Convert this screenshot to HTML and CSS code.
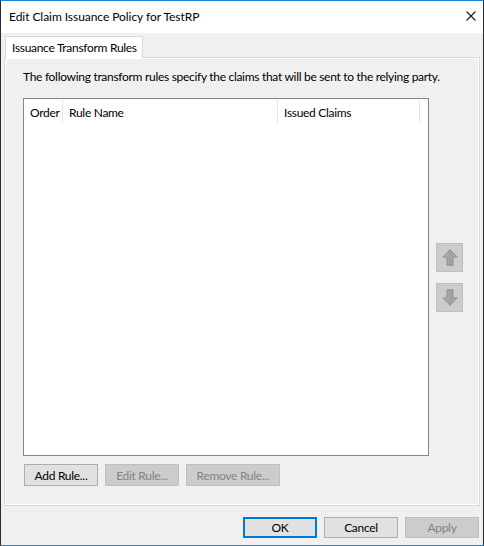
FILE: index.html
```html
<!DOCTYPE html>
<html>
<head>
<meta charset="utf-8">
<link rel="stylesheet" href="styles.css">
</head>
<body>
<div class="window">
  <div class="titlebar">
    <span class="title">Edit Claim Issuance Policy for TestRP</span>
    <svg class="close" width="10" height="10" viewBox="0 0 10 10"><path d="M0.5 0.5 L9.5 9.5 M9.5 0.5 L0.5 9.5" stroke="#1a1a1a" stroke-width="1.1" fill="none"/></svg>
  </div>
  <div class="tabs">
    <div class="tab">Issuance Transform Rules</div>
  </div>
  <div class="tabpage">
    <div class="panel">
      <p class="desc">The following transform rules specify the claims that will be sent to the relying party.</p>
      <div class="listrow">
        <div class="list">
          <div class="header">
            <div class="col col-order">Order</div>
            <div class="col col-name">Rule Name</div>
            <div class="col col-claims">Issued Claims</div>
          </div>
        </div>
        <div class="side">
          <div class="sidebtn">
            <svg width="16" height="17" viewBox="0 0 16 17"><defs><linearGradient id="ga" x1="0" x2="1" y1="0" y2="0"><stop offset="0" stop-color="#b8b8b8"/><stop offset="0.5" stop-color="#a0a0a0"/><stop offset="1" stop-color="#acacac"/></linearGradient></defs><path d="M8 0.8 L15.2 8 L11 8 L11 16.2 L5 16.2 L5 8 L0.8 8 Z" fill="url(#ga)" stroke="#8e8e8e" stroke-width="1"/></svg>
          </div>
          <div class="sidebtn">
            <svg width="16" height="17" viewBox="0 0 16 17"><defs><linearGradient id="gb" x1="0" x2="1" y1="0" y2="0"><stop offset="0" stop-color="#b8b8b8"/><stop offset="0.5" stop-color="#a0a0a0"/><stop offset="1" stop-color="#acacac"/></linearGradient></defs><path d="M8 16.2 L15.2 9 L11 9 L11 0.8 L5 0.8 L5 9 L0.8 9 Z" fill="url(#gb)" stroke="#8e8e8e" stroke-width="1"/></svg>
          </div>
        </div>
      </div>
      <div class="btnrow">
        <div class="btn">Add Rule...</div>
        <div class="btn disabled">Edit Rule...</div>
        <div class="btn disabled wide">Remove Rule...</div>
      </div>
    </div>
  </div>
  <div class="footer">
    <div class="btn default">OK</div>
    <div class="btn">Cancel</div>
    <div class="btn disabled">Apply</div>
  </div>
</div>
</body>
</html>
```

FILE: styles.css
```css
html, body {
  margin: 0;
  padding: 0;
  background: #f0f0f0;
}
body {
  font-family: "Lato", "Liberation Sans", sans-serif;
  font-size: 12px;
  letter-spacing: -0.3px;
  color: #000;
}
.window {
  box-sizing: border-box;
  width: 484px;
  height: 546px;
  border-top: 1px solid #1883d7;
  border-bottom: 1px solid #1883d7;
  border-left: 1px solid #2b2b2b;
  border-right: 1px solid #2b2b2b;
  background: #f0f0f0;
  display: flex;
  flex-direction: column;
}
.titlebar {
  height: 32px;
  background: #fff;
  display: flex;
  align-items: center;
  justify-content: space-between;
  padding: 0 7px 0 8px;
  flex: none;
}
.title {
  font-size: 12px;
  letter-spacing: -0.05px;
  padding-bottom: 2px;
  white-space: nowrap;
}
.close {
  margin-bottom: 2px;
}
.tabs {
  margin-top: 3px;
  padding-left: 4px;
  display: flex;
  height: 21px;
  position: relative;
  z-index: 1;
  flex: none;
}
.tab {
  box-sizing: border-box;
  width: 138px;
  height: 22px;
  border: 1px solid #d9d9d9;
  border-bottom: none;
  background: #fff;
  padding: 3px 0 0 6px;
  line-height: 15px;
  white-space: nowrap;
}
.tabpage {
  box-sizing: border-box;
  margin-left: 3px;
  width: 476px;
  height: 449px;
  border: 1px solid #d9d9d9;
  background: #fff;
  padding: 1px;
  flex: none;
}
.panel {
  box-sizing: border-box;
  height: 100%;
  background: #f0f0f0;
  padding: 10px 0 0 17px;
  display: flex;
  flex-direction: column;
}
.desc {
  margin: 0;
  line-height: 15px;
  height: 29px;
  white-space: nowrap;
}
.listrow {
  display: flex;
  gap: 7px;
}
.list {
  box-sizing: border-box;
  width: 406px;
  height: 358px;
  border: 1px solid #828790;
  background: #fff;
}
.header {
  display: flex;
  height: 25px;
  padding-top: 1px;
}
.col {
  box-sizing: border-box;
  border-right: 1px solid #e5e5e5;
  padding: 5px 0 0 6px;
  height: 23px;
  white-space: nowrap;
}
.col-order { width: 39px; }
.col-name { width: 215px; }
.col-claims { width: 142px; }
.side {
  display: flex;
  flex-direction: column;
  justify-content: center;
  gap: 11px;
}
.sidebtn {
  box-sizing: border-box;
  width: 27px;
  height: 29px;
  background: #cccccc;
  border: 1px solid #bfbfbf;
  display: flex;
  align-items: center;
  justify-content: center;
}
.btnrow {
  display: flex;
  gap: 7px;
  margin-top: 8px;
  padding-left: 1px;
}
.btn {
  box-sizing: border-box;
  width: 74px;
  height: 22px;
  background: #e1e1e1;
  border: 1px solid #adadad;
  display: flex;
  align-items: center;
  justify-content: center;
  line-height: 15px;
  white-space: nowrap;
}
.btn.wide { width: 94px; }
.btn.disabled {
  background: #cccccc;
  border-color: #bfbfbf;
  color: #838383;
}
.btn.default {
  border: 2px solid #0078d7;
}
.footer {
  display: flex;
  justify-content: flex-end;
  gap: 7px;
  padding: 11px 4px 0 0;
}
.footer .btn {
  height: 21px;
}
```
